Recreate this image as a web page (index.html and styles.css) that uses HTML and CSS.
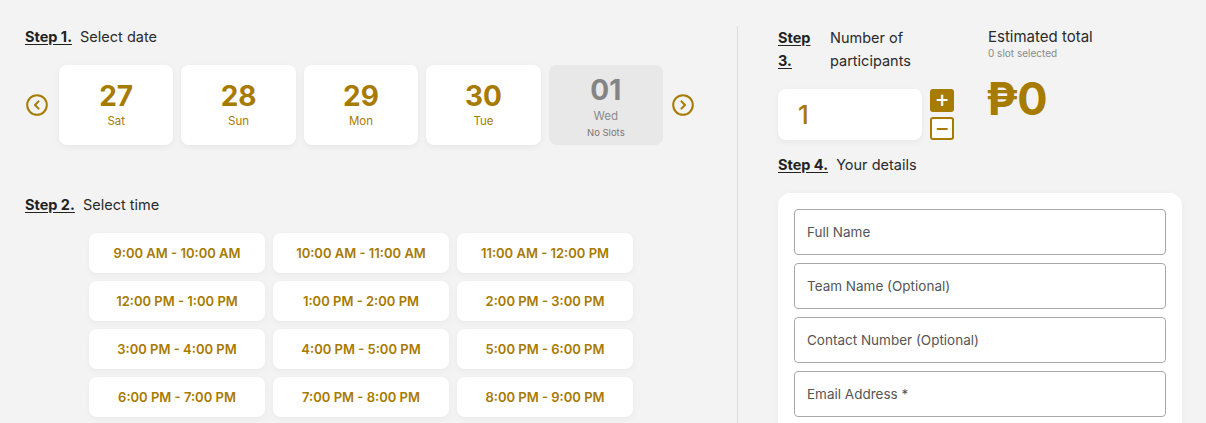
FILE: index.html
```html
<html>

<head>
    <title>Book a slot</title>
    <link rel="stylesheet" href="styles.css">
</head>

<body>
    <div class="page">
        <div class="leftCol">
            <div class="stepLabel"><span class="stepNo">Step 1.</span> Select date</div>
            <div class="dateRow">
                <button class="arrowBtn">
                    <svg width="22" height="22" viewBox="0 0 22 22"><circle cx="11" cy="11" r="9.8" fill="none" stroke="#a77a00" stroke-width="2"/><path d="M12.6 7.4 L9 11 L12.6 14.6" fill="none" stroke="#a77a00" stroke-width="2" stroke-linecap="round" stroke-linejoin="round"/></svg>
                </button>
                <div class="dateCard"><div class="dateNum">27</div><div class="dateDay">Sat</div></div>
                <div class="dateCard"><div class="dateNum">28</div><div class="dateDay">Sun</div></div>
                <div class="dateCard"><div class="dateNum">29</div><div class="dateDay">Mon</div></div>
                <div class="dateCard"><div class="dateNum">30</div><div class="dateDay">Tue</div></div>
                <div class="dateCard disabled"><div class="dateNum">01</div><div class="dateDay">Wed</div><div class="noSlots">No Slots</div></div>
                <button class="arrowBtn">
                    <svg width="22" height="22" viewBox="0 0 22 22"><circle cx="11" cy="11" r="9.8" fill="none" stroke="#a77a00" stroke-width="2"/><path d="M9.4 7.4 L13 11 L9.4 14.6" fill="none" stroke="#a77a00" stroke-width="2" stroke-linecap="round" stroke-linejoin="round"/></svg>
                </button>
            </div>

            <div class="stepLabel step2"><span class="stepNo">Step 2.</span> Select time</div>
            <div class="timeGrid">
                <div class="slot">9:00 AM - 10:00 AM</div>
                <div class="slot">10:00 AM - 11:00 AM</div>
                <div class="slot">11:00 AM - 12:00 PM</div>
                <div class="slot">12:00 PM - 1:00 PM</div>
                <div class="slot">1:00 PM - 2:00 PM</div>
                <div class="slot">2:00 PM - 3:00 PM</div>
                <div class="slot">3:00 PM - 4:00 PM</div>
                <div class="slot">4:00 PM - 5:00 PM</div>
                <div class="slot">5:00 PM - 6:00 PM</div>
                <div class="slot">6:00 PM - 7:00 PM</div>
                <div class="slot">7:00 PM - 8:00 PM</div>
                <div class="slot">8:00 PM - 9:00 PM</div>
            </div>
        </div>

        <div class="rightCol">
            <div class="topRow">
                <div class="participants">
                    <div class="step3Head">
                        <span class="stepNo step3No">Step 3.</span>
                        <span class="step3Text">Number of participants</span>
                    </div>
                    <div class="countRow">
                        <div class="countBox">1</div>
                        <div class="countBtns">
                            <button class="plusBtn">+</button>
                            <button class="minusBtn">&minus;</button>
                        </div>
                    </div>
                </div>
                <div class="total">
                    <div class="totalTitle">Estimated total</div>
                    <div class="totalSub">0 slot selected</div>
                    <div class="totalAmount">₱0</div>
                </div>
            </div>

            <div class="stepLabel step4"><span class="stepNo">Step 4.</span> Your details</div>
            <div class="detailsCard">
                <input class="field" type="text" placeholder="Full Name" />
                <input class="field" type="text" placeholder="Team Name (Optional)" />
                <input class="field" type="text" placeholder="Contact Number (Optional)" />
                <input class="field" type="text" placeholder="Email Address *" />
            </div>
        </div>
    </div>
</body>

</html>
```

FILE: styles.css
```css
body {
    margin: 0;
    background: #f3f3f3;
    font-family: "Inter", "Open Sans", sans-serif;
    color: #2a2a2a;
    height: 423px;
    overflow: hidden;
}

.page {
    display: flex;
    padding: 26px 0 0 25px;
    height: 423px;
    box-sizing: border-box;
    overflow: hidden;
}

.leftCol {
    width: 712px;
    border-right: 1px solid #dcdcdc;
}

.stepLabel {
    font-size: 14.5px;
    line-height: 22px;
}

.stepNo {
    font-weight: 700;
    text-decoration: underline;
    text-underline-offset: 2px;
    margin-right: 4px;
    color: #222;
}

.dateRow {
    display: flex;
    align-items: center;
    gap: 8px;
    margin-top: 17px;
    width: 672px;
}

.arrowBtn {
    border: none;
    background: none;
    padding: 0;
    width: 22px;
    height: 22px;
    margin: 0 3px 0 1px;
    display: flex;
}

.dateCard {
    width: 115px;
    height: 80px;
    background: #fff;
    border-radius: 8px;
    box-shadow: 0 2px 6px rgba(0, 0, 0, 0.05);
    display: flex;
    flex-direction: column;
    align-items: center;
    justify-content: center;
    color: #a77a00;
}

.dateNum {
    font-size: 28px;
    font-weight: 700;
    line-height: 32px;
    margin-top: -1px;
}

.dateDay {
    font-size: 11.5px;
    line-height: 18px;
}

.dateCard.disabled {
    background: #e8e8e8;
    box-shadow: none;
    color: #8a8a8a;
    justify-content: flex-start;
    padding-top: 10px;
    box-sizing: border-box;
}

.disabled .dateNum {
    color: #848484;
}

.disabled .dateDay {
    line-height: 20px;
}

.noSlots {
    font-size: 9.5px;
    line-height: 14px;
    color: #777;
}

.step2 {
    margin-top: 49px;
}

.timeGrid {
    display: grid;
    grid-template-columns: repeat(3, 176px);
    gap: 8px;
    margin: 17px 0 0 64px;
}

.slot {
    height: 40px;
    background: #fff;
    border-radius: 8px;
    box-shadow: 0 2px 6px rgba(0, 0, 0, 0.04);
    display: flex;
    align-items: center;
    justify-content: center;
    color: #a77a00;
    font-size: 13px;
    font-weight: 600;
}

.rightCol {
    padding-left: 40px;
    width: 404px;
}

.topRow {
    display: flex;
}

.participants {
    width: 210px;
}

.step3Head {
    display: flex;
    gap: 12px;
    font-size: 14.5px;
    line-height: 23px;
}

.step3No {
    width: 40px;
    margin-right: 0;
}

.step3Text {
    width: 90px;
}

.countRow {
    display: flex;
    gap: 8px;
    margin-top: 17px;
}

.countBox {
    width: 144px;
    height: 51px;
    background: #fff;
    border-radius: 8px;
    box-shadow: 0 2px 6px rgba(0, 0, 0, 0.05);
    color: #a77a00;
    font-size: 26px;
    font-weight: 500;
    line-height: 51px;
    padding-left: 20px;
    box-sizing: border-box;
}

.countBtns {
    display: flex;
    flex-direction: column;
    gap: 5px;
}

.plusBtn,
.minusBtn {
    width: 24px;
    height: 23px;
    border-radius: 3px;
    padding: 0;
    font-family: "DejaVu Sans", sans-serif;
    font-size: 17px;
    font-weight: 700;
    line-height: 19px;
    box-sizing: border-box;
}

.plusBtn {
    background: #a77a00;
    border: 2px solid #a77a00;
    color: #fff;
}

.minusBtn {
    background: #fff;
    border: 2px solid #a77a00;
    color: #a77a00;
}

.total {
    color: #2a2a2a;
}

.totalTitle {
    font-size: 15px;
    line-height: 22px;
}

.totalSub {
    font-size: 10px;
    line-height: 10px;
    color: #8a8a8a;
}

.totalAmount {
    font-size: 45px;
    font-weight: 700;
    color: #a77a00;
    line-height: 50px;
    margin-top: 16px;
    margin-left: -2px;
    letter-spacing: -1px;
}

.step4 {
    margin-top: 14px;
}

.detailsCard {
    margin-top: 17px;
    background: #fff;
    border-radius: 12px;
    padding: 16px;
    display: flex;
    flex-direction: column;
    gap: 8px;
    box-shadow: 0 2px 8px rgba(0, 0, 0, 0.04);
}

.field {
    height: 46px;
    border: 1px solid #a8a8a8;
    border-radius: 4px;
    padding: 0 12px;
    font-family: "Inter", sans-serif;
    font-size: 13.5px;
    box-sizing: border-box;
    width: 100%;
    flex-shrink: 0;
}

.field::placeholder {
    color: #555;
}
```
